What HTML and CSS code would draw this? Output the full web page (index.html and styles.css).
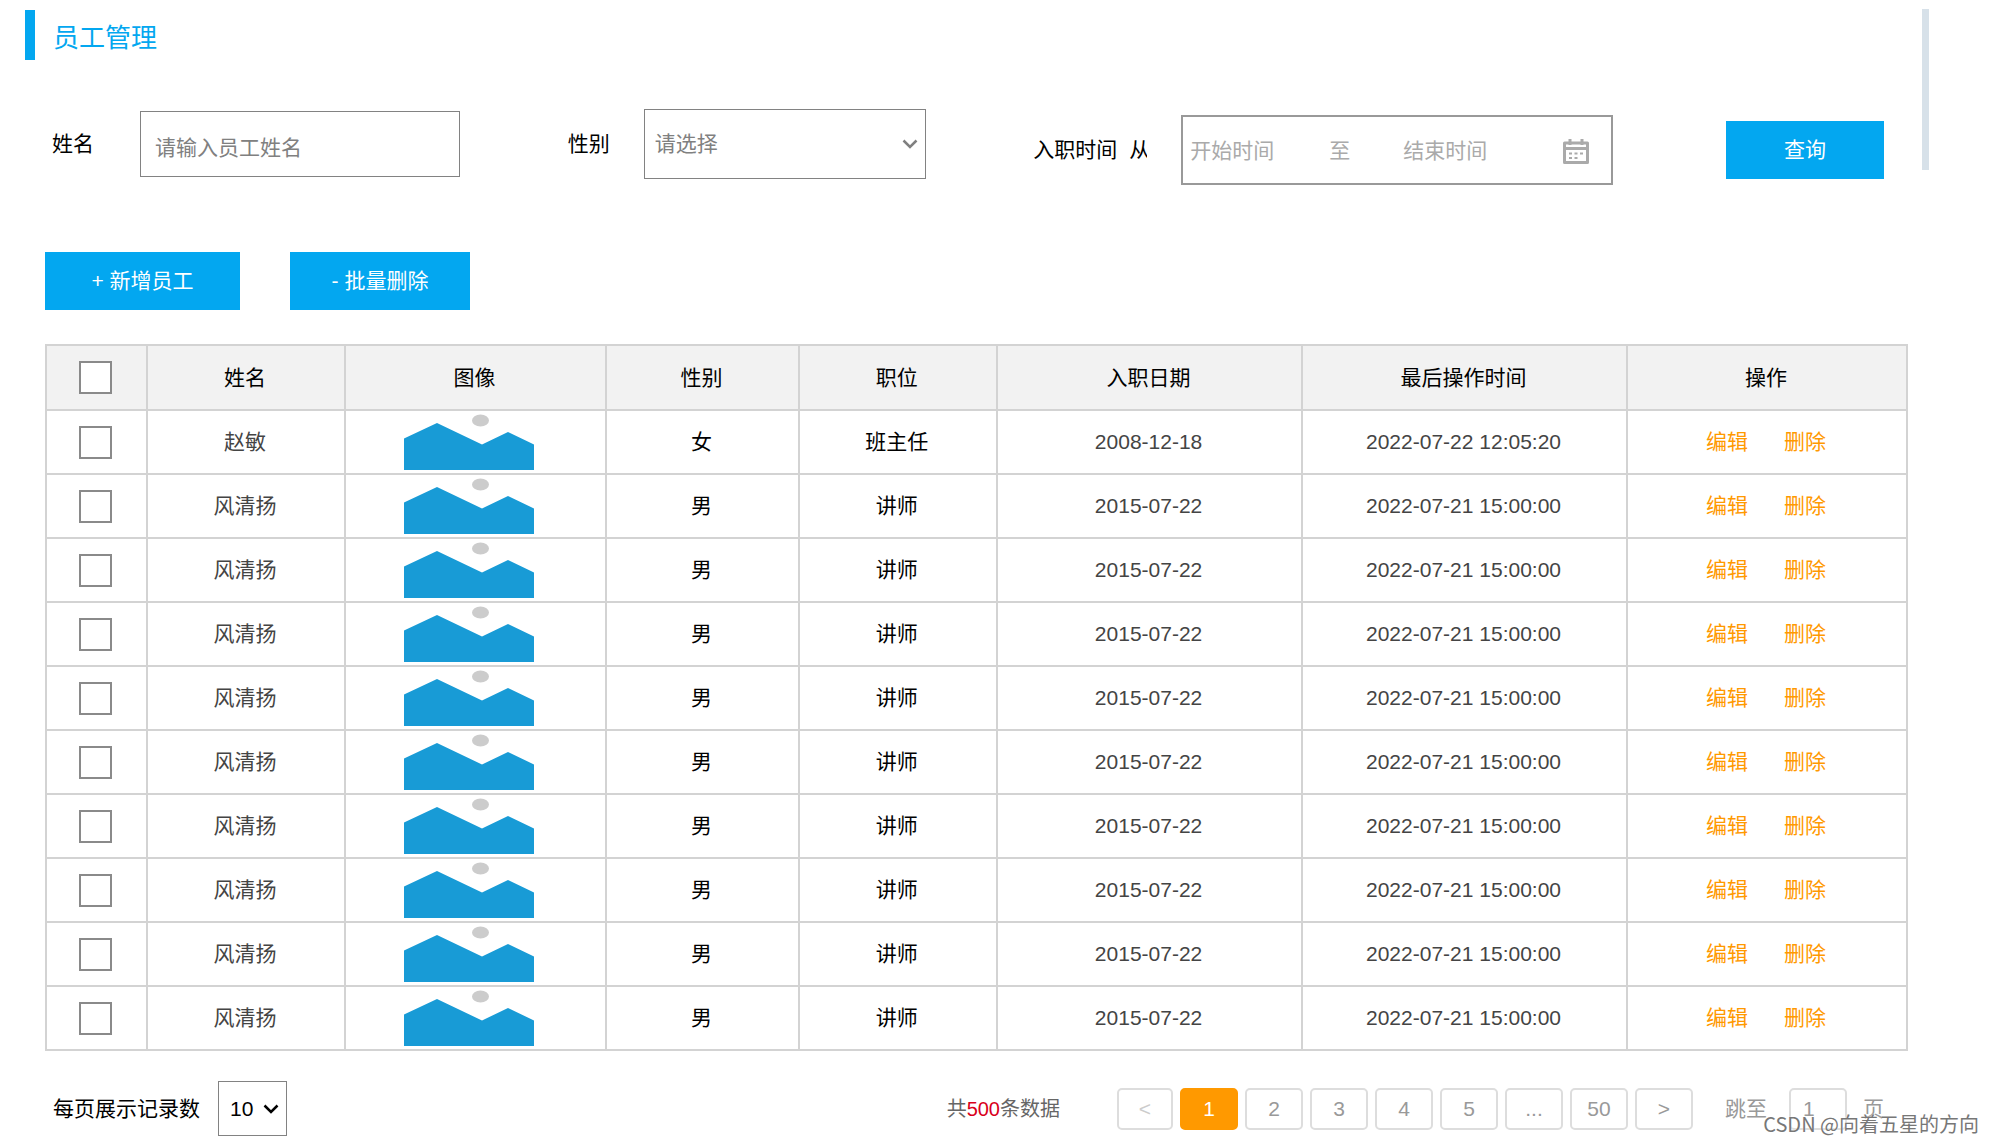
FILE: index.html
```html
<!DOCTYPE html>
<html lang="zh-CN">
<head>
<meta charset="utf-8">
<meta name="viewport" content="width=device-width, initial-scale=1">
<title>员工管理</title>
<link rel="stylesheet" href="styles.css">
</head>
<body>
<svg class="sprite" aria-hidden="true">
  <symbol id="photo" viewBox="0 0 130 56">
    <ellipse cx="76.500" cy="6.500" rx="8.500" ry="6" fill="#ccc"/>
    <path d="M0 24.500 33 9l45 21.500L104 18l26 12.500V56H0z" fill="#189bd6"/>
  </symbol>
  <symbol id="chevron" viewBox="0 0 16 10">
    <path d="M1.500 1.500 8 8l6.500-6.500" fill="none" stroke="currentColor" stroke-width="2.500"/>
  </symbol>
</svg>
<main class="page">
  <h1 class="title">员工管理</h1>

  <form class="filters">
    <div class="field">
      <label class="label" for="name">姓名</label>
      <input class="control name-input" id="name" type="text" placeholder="请输入员工姓名">
    </div>
    <div class="field">
      <label class="label label-near" for="gender">性别</label>
      <div class="select-wrap gender">
        <select class="control gender-select" id="gender">
          <option>请选择</option><option>男</option><option>女</option>
        </select>
        <svg class="chevron"><use href="#chevron"/></svg>
      </div>
    </div>
    <div class="field lowered">
      <label class="label label-date" for="from">入职时间</label>
      <span class="from">从</span>
      <div class="range">
        <input class="date" id="from" type="text" placeholder="开始时间">
        <span>至</span>
        <input class="date" type="text" placeholder="结束时间" aria-label="结束时间">
        <svg class="calendar" viewBox="0 0 26 25" fill="none" stroke="#aaa" stroke-width="3">
          <path d="M1.500 4h23v19.500h-23z" stroke-linejoin="round"/>
          <path d="M1.500 9.500h23M7 0v6M19 0v6"/>
          <path d="M6 14.500h3m2.500 0h3m2.500 0h3M6 19h3m2.500 0h3" stroke-width="2"/>
        </svg>
      </div>
    </div>
    <button class="btn btn-search lowered" type="button">查询</button>
  </form>

  <div class="toolbar">
    <button class="btn btn-add" type="button">+ 新增员工</button>
    <button class="btn btn-delete" type="button">- 批量删除</button>
  </div>

  <table class="staff">
    <colgroup>
      <col class="c-check"><col class="c-name"><col class="c-photo"><col class="c-gender">
      <col class="c-job"><col class="c-date"><col class="c-time"><col class="c-actions">
    </colgroup>
    <thead>
      <tr><th><input type="checkbox" aria-label="全选"></th><th>姓名</th><th>图像</th><th>性别</th><th>职位</th><th>入职日期</th><th>最后操作时间</th><th>操作</th></tr>
    </thead>
    <tbody>
      <tr><td><input type="checkbox" aria-label="选择"></td><td class="soft">赵敏</td><td class="pic"><svg><use href="#photo"/></svg></td><td>女</td><td>班主任</td><td class="soft">2008-12-18</td><td class="soft">2022-07-22 12:05:20</td><td><a href="#">编辑</a><a href="#">删除</a></td></tr>
      <tr><td><input type="checkbox" aria-label="选择"></td><td class="soft">风清扬</td><td class="pic"><svg><use href="#photo"/></svg></td><td>男</td><td>讲师</td><td class="soft">2015-07-22</td><td class="soft">2022-07-21 15:00:00</td><td><a href="#">编辑</a><a href="#">删除</a></td></tr>
      <tr><td><input type="checkbox" aria-label="选择"></td><td class="soft">风清扬</td><td class="pic"><svg><use href="#photo"/></svg></td><td>男</td><td>讲师</td><td class="soft">2015-07-22</td><td class="soft">2022-07-21 15:00:00</td><td><a href="#">编辑</a><a href="#">删除</a></td></tr>
      <tr><td><input type="checkbox" aria-label="选择"></td><td class="soft">风清扬</td><td class="pic"><svg><use href="#photo"/></svg></td><td>男</td><td>讲师</td><td class="soft">2015-07-22</td><td class="soft">2022-07-21 15:00:00</td><td><a href="#">编辑</a><a href="#">删除</a></td></tr>
      <tr><td><input type="checkbox" aria-label="选择"></td><td class="soft">风清扬</td><td class="pic"><svg><use href="#photo"/></svg></td><td>男</td><td>讲师</td><td class="soft">2015-07-22</td><td class="soft">2022-07-21 15:00:00</td><td><a href="#">编辑</a><a href="#">删除</a></td></tr>
      <tr><td><input type="checkbox" aria-label="选择"></td><td class="soft">风清扬</td><td class="pic"><svg><use href="#photo"/></svg></td><td>男</td><td>讲师</td><td class="soft">2015-07-22</td><td class="soft">2022-07-21 15:00:00</td><td><a href="#">编辑</a><a href="#">删除</a></td></tr>
      <tr><td><input type="checkbox" aria-label="选择"></td><td class="soft">风清扬</td><td class="pic"><svg><use href="#photo"/></svg></td><td>男</td><td>讲师</td><td class="soft">2015-07-22</td><td class="soft">2022-07-21 15:00:00</td><td><a href="#">编辑</a><a href="#">删除</a></td></tr>
      <tr><td><input type="checkbox" aria-label="选择"></td><td class="soft">风清扬</td><td class="pic"><svg><use href="#photo"/></svg></td><td>男</td><td>讲师</td><td class="soft">2015-07-22</td><td class="soft">2022-07-21 15:00:00</td><td><a href="#">编辑</a><a href="#">删除</a></td></tr>
      <tr><td><input type="checkbox" aria-label="选择"></td><td class="soft">风清扬</td><td class="pic"><svg><use href="#photo"/></svg></td><td>男</td><td>讲师</td><td class="soft">2015-07-22</td><td class="soft">2022-07-21 15:00:00</td><td><a href="#">编辑</a><a href="#">删除</a></td></tr>
      <tr><td><input type="checkbox" aria-label="选择"></td><td class="soft">风清扬</td><td class="pic"><svg><use href="#photo"/></svg></td><td>男</td><td>讲师</td><td class="soft">2015-07-22</td><td class="soft">2022-07-21 15:00:00</td><td><a href="#">编辑</a><a href="#">删除</a></td></tr>
    </tbody>
  </table>

  <footer class="footer">
    <label for="size">每页展示记录数</label>
    <div class="select-wrap size">
      <select class="control size-select" id="size"><option>10</option><option>20</option></select>
      <svg class="chevron"><use href="#chevron"/></svg>
    </div>
    <p class="total">共<span class="count">500</span>条数据</p>
    <nav class="pager" aria-label="分页">
      <button class="page-btn prev" type="button">&lt;</button>
      <button class="page-btn current" type="button">1</button>
      <button class="page-btn" type="button">2</button>
      <button class="page-btn" type="button">3</button>
      <button class="page-btn" type="button">4</button>
      <button class="page-btn" type="button">5</button>
      <button class="page-btn" type="button">...</button>
      <button class="page-btn" type="button">50</button>
      <button class="page-btn" type="button">&gt;</button>
    </nav>
    <div class="jump">
      <label for="jump">跳至</label>
      <input class="jump-input" id="jump" type="text" value="1">
      <span>页</span>
    </div>
  </footer>
</main>
<div class="scroll-thumb"></div>
<div class="watermark">CSDN @向着五星的方向</div>
</body>
</html>
```

FILE: styles.css
```css
* { box-sizing: border-box; }

body {
  position: relative;
  margin: 0;
  background: #fff;
  color: #000;
  font: 21px/30px "Liberation Sans", "Noto Sans CJK SC", sans-serif;
}

input, select, button { font: inherit; color: inherit; margin: 0; }
p { margin: 0; }
.sprite { position: absolute; width: 0; height: 0; }
.page { padding: 10px 84px 6px 45px; }

.title {
  margin: 0 0 43px -20px;
  padding: 6px 0 0 18px;
  border-left: 10px solid #03a7f0;
  color: #03a7f0;
  font-size: 26px;
  font-weight: 400;
  line-height: 44px;
}

/* Search filters */
.filters {
  display: flex;
  align-items: center;
  justify-content: space-between;
  padding: 0 24px 0 7px;
}
.field { display: flex; align-items: center; white-space: nowrap; }
.lowered { margin-top: 12px; }
.label { margin-right: 46px; }
.label-near { margin-right: 34px; }
.label-date { margin-right: 12px; }
.control {
  border: 1px solid #828282;
  border-radius: 0;
  background: #fff;
  appearance: none;
}
.name-input { width: 320px; height: 66px; padding: 8px 14px 0; }
::placeholder { color: #808080; opacity: 1; }

.select-wrap { position: relative; }
.select-wrap .control { width: 100%; height: 100%; }
.chevron {
  position: absolute;
  top: 50%;
  right: 8px;
  width: 16px;
  height: 10px;
  margin-top: -5px;
  pointer-events: none;
}
.gender { width: 282px; height: 70px; color: #808080; }
.gender-select { padding: 0 10px; }

.from { width: 18px; margin-right: 34px; overflow: hidden; }
.range {
  display: flex;
  align-items: center;
  width: 432px;
  height: 70px;
  padding: 2px 22px 0 7px;
  border: 2px solid #999;
  color: #aaa;
}
.date { width: 85px; padding: 0; border: 0; background: none; }
.range .date::placeholder { color: #aaa; }
.range span { margin: 0 53px 0 54px; }
.calendar { width: 26px; height: 25px; margin-left: auto; }

.btn {
  height: 58px;
  padding: 0;
  border: 0;
  background: #03a7f0;
  color: #fff;
}
.btn-search { width: 158px; margin-left: 5px; }
.toolbar { display: flex; gap: 50px; margin: 67px 0 34px; }
.btn-add { width: 195px; }
.btn-delete { width: 180px; }

/* Staff table */
.staff {
  width: 100%;
  table-layout: fixed;
  border-collapse: collapse;
  text-align: center;
}
.c-check { width: 5.450%; }
.c-name { width: 10.600%; }
.c-photo { width: 14.050%; }
.c-gender { width: 10.350%; }
.c-job { width: 10.650%; }
.c-date { width: 16.400%; }
.c-time { width: 17.450%; }
.c-actions { width: 15.050%; }
.staff th, .staff td {
  height: 64px;
  padding: 0 2px 0 0;
  border: 2px solid #d3d3d3;
  font-weight: 400;
}
.staff th { height: 65px; background: #f2f2f2; }
.staff .soft { color: #444; }
.staff .pic { padding-right: 12px; }
.pic svg { display: block; width: 130px; height: 56px; margin: 0 auto; }
.staff a { color: #f90; text-decoration: none; }
.staff a + a { margin-left: 36px; }
.staff input {
  display: block;
  width: 33px;
  height: 33px;
  margin: 0 auto;
  border: 2px solid #8a8a8a;
  background: #fff;
  appearance: none;
}

/* Paging */
.footer { display: flex; align-items: center; margin-top: 30px; padding: 0 24px 0 8px; white-space: nowrap; }
.size { width: 69px; height: 55px; margin-left: 18px; }
.size-select { padding: 0 11px; }
.total { margin-left: auto; color: #666; font-size: 20px; }
.count { color: #d9001b; }
.pager { display: flex; gap: 7px; margin-left: 57px; }
.page-btn, .jump-input {
  width: 58px;
  height: 42px;
  padding: 0;
  border: 2px solid #ddd;
  border-radius: 5px;
  background: #fff;
  color: #999;
}
.prev { width: 56px; color: #ccc; }
.current { border-color: #f90; background: #f90; color: #fff; }
.jump { display: flex; align-items: center; margin-left: 32px; color: #999; }
.jump-input { margin: 0 16px 0 22px; padding-left: 12px; }

.scroll-thumb {
  position: absolute;
  top: 9px;
  right: 63px;
  width: 7px;
  height: 161px;
  background: #d7e1e9;
}
.watermark {
  position: absolute;
  right: 13px;
  bottom: 3px;
  color: #777;
  font: 20px/30px "Noto Sans CJK SC", sans-serif;
  text-shadow: 0 0 2px #fff;
}
```
